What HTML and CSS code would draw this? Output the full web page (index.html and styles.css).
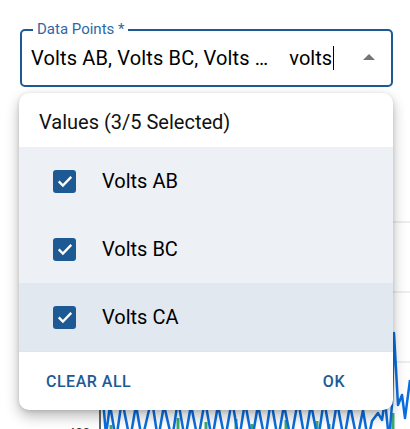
FILE: index.html
```html
<!DOCTYPE html>
<html>
<head>
<meta charset="utf-8">
<link rel="stylesheet" href="styles.css">
</head>
<body>
<div class="page">
  <div class="field">
    <span class="field-label">Data Points *</span>
    <div class="field-value">
      <span class="chips">Volts AB, Volts BC, Volts …</span>
      <span class="query">volts</span><span class="caret"></span>
    </div>
    <span class="arrow"></span>
  </div>
  <svg class="chart" viewBox="0 87 410 342" width="410" height="342">
    <line x1="100" y1="222" x2="410" y2="222" class="grid"/>
    <line x1="100" y1="292" x2="410" y2="292" class="grid"/>
    <line x1="100" y1="362" x2="410" y2="362" class="grid"/>
    <line x1="100" y1="395" x2="100" y2="429" class="axis"/>
    <text x="90" y="437" class="tick" text-anchor="end">400</text>
    <g class="green">
      <line x1="111" y1="425" x2="111" y2="429"/>
      <line x1="178" y1="418" x2="178" y2="429"/>
      <line x1="206" y1="422" x2="206" y2="429"/>
      <line x1="236" y1="419" x2="236" y2="429"/>
      <line x1="252" y1="424" x2="252" y2="429"/>
      <line x1="286" y1="420" x2="286" y2="429"/>
      <line x1="317" y1="421" x2="317" y2="429"/>
      <line x1="329" y1="424" x2="329" y2="429"/>
      <line x1="393" y1="413" x2="393" y2="429"/>
    </g>
    <polyline class="blue" points="103,400 106,435 110,405 116,440 122,400 130,440 136,405 142,440 149,410 152,400 158,440 164,405 172,440 178,400 185,440 191,405 198,440 205,400 212,440 218,405 225,440 232,400 239,440 245,402 252,440 258,405 265,440 271,400 278,440 284,405 291,440 298,400 305,440 311,404 318,440 324,400 331,440 337,402 344,440 350,405 357,440 363,410 368,440 372,421 378,413 382,420 385,400 389,440 392,405 394,333 398,405 402,395 405,418 410,380"/>
  </svg>
  <div class="menu">
    <div class="menu-header">Values (3/5 Selected)</div>
    <div class="option">
      <span class="checkbox"><svg viewBox="0 0 24 24" width="20" height="20"><path d="M4.5 12.5l5 5L19.5 7" fill="none" stroke="#fff" stroke-width="2.8"/></svg></span>
      <span class="option-text">Volts AB</span>
    </div>
    <div class="option">
      <span class="checkbox"><svg viewBox="0 0 24 24" width="20" height="20"><path d="M4.5 12.5l5 5L19.5 7" fill="none" stroke="#fff" stroke-width="2.8"/></svg></span>
      <span class="option-text">Volts BC</span>
    </div>
    <div class="option option-hover">
      <span class="checkbox"><svg viewBox="0 0 24 24" width="20" height="20"><path d="M4.5 12.5l5 5L19.5 7" fill="none" stroke="#fff" stroke-width="2.8"/></svg></span>
      <span class="option-text">Volts CA</span>
    </div>
    <div class="menu-footer">
      <button class="btn">CLEAR ALL</button>
      <button class="btn">OK</button>
    </div>
  </div>
</div>
</body>
</html>
```
FILE: styles.css
```css
html, body {
  margin: 0;
  padding: 0;
  background: #fff;
  font-family: Roboto, "Liberation Sans", Arial, sans-serif;
  overflow: hidden;
}
.page {
  position: relative;
  width: 410px;
  height: 429px;
  overflow: hidden;
  padding-top: 29px;
  box-sizing: border-box;
}
.field {
  position: relative;
  margin-left: 20px;
  width: 373px;
  height: 58px;
  box-sizing: border-box;
  border: 2px solid #1d5a94;
  border-radius: 5px;
  display: flex;
  align-items: center;
}
.field-label {
  position: absolute;
  left: 11px;
  top: -12px;
  padding: 0 4px;
  background: #fff;
  font-size: 15px;
  line-height: 20px;
  color: #2d68a6;
}
.field-value {
  display: flex;
  align-items: center;
  padding-left: 9px;
  font-size: 20px;
  color: #000;
  white-space: nowrap;
}
.chips {
  letter-spacing: 0.15px;
}
.query {
  margin-left: 21px;
}
.caret {
  display: inline-block;
  width: 1px;
  height: 24px;
  background: #000;
  margin-left: 1px;
}
.arrow {
  position: absolute;
  left: 341px;
  top: 23px;
  width: 0;
  height: 0;
  border-left: 6px solid transparent;
  border-right: 6px solid transparent;
  border-bottom: 6px solid #757575;
}
.chart {
  display: block;
}
.grid { stroke: #dcdcdc; stroke-width: 1; }
.axis { stroke: #333; stroke-width: 1.5; }
.tick { font-size: 13px; fill: #333; font-family: Roboto, sans-serif; }
.green line { stroke: #3daa6a; stroke-width: 3; }
.blue { fill: none; stroke: #0a6ee0; stroke-width: 2.5; stroke-linejoin: round; }
.menu {
  position: absolute;
  left: 19px;
  top: 93px;
  width: 374px;
  height: 317px;
  background: #fff;
  border-radius: 10px;
  box-shadow: 0 6px 14px rgba(0,0,0,0.28), 0 1px 4px rgba(0,0,0,0.12);
  overflow: hidden;
  display: flex;
  flex-direction: column;
}
.menu-header {
  height: 54px;
  display: flex;
  align-items: center;
  padding-left: 20px;
  padding-top: 4px;
  box-sizing: border-box;
  font-size: 20px;
  color: #111;
}
.option {
  height: 68px;
  display: flex;
  align-items: center;
  background: #edf1f5;
  padding-left: 34px;
}
.option-hover {
  background: #e2e8f0;
}
.checkbox {
  width: 23px;
  height: 23px;
  border-radius: 3px;
  background: #1d5a94;
  display: flex;
  align-items: center;
  justify-content: center;
}
.option-text {
  margin-left: 26px;
  font-size: 20px;
  color: #000;
}
.menu-footer {
  flex: 1;
  display: flex;
  align-items: center;
  justify-content: space-between;
  padding: 0 48px 0 27px;
  border-top: 1px solid #e4e4e4;
}
.btn {
  border: 0;
  background: none;
  padding: 0;
  font-family: Roboto, "Liberation Sans", Arial, sans-serif;
  font-size: 16px;
  font-weight: 500;
  letter-spacing: 0.5px;
  color: #1d5a94;
}
```
